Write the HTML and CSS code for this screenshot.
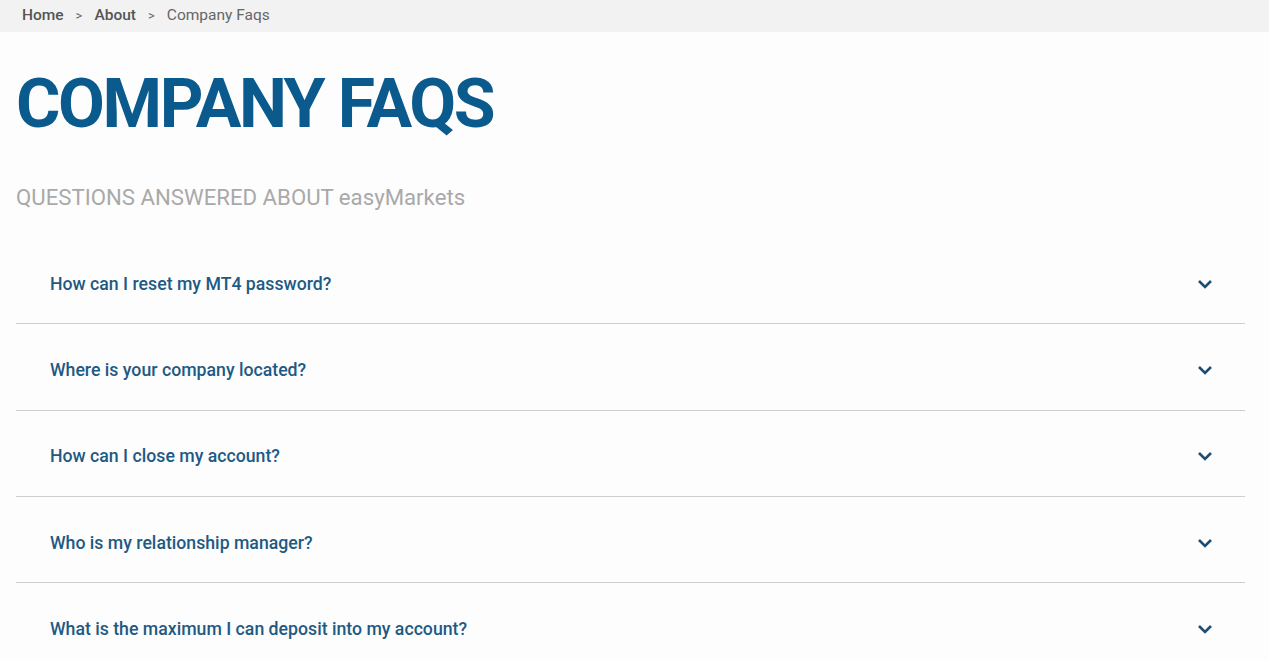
FILE: index.html
```html
<!DOCTYPE html>
<html lang="en">
<head>
  <meta charset="UTF-8">
  <title>Company Faqs</title>
  <link rel="stylesheet" href="styles.css">
</head>
<body>

<nav class="crumbs">
  <a href="#">Home</a>
  <span class="sep">&gt;</span>
  <a href="#">About</a>
  <span class="sep">&gt;</span>
  <span class="current">Company Faqs</span>
</nav>

<main class="page">
  <h1>COMPANY FAQS</h1>
  <h2>QUESTIONS ANSWERED ABOUT easyMarkets</h2>

  <div class="faq">
    <div class="faq-item">
      <span class="q">How can I reset my MT4 password?</span>
      <svg class="chev" viewBox="0 0 16 10"><path d="M2 2l6 6 6-6"/></svg>
    </div>
    <div class="faq-item">
      <span class="q">Where is your company located?</span>
      <svg class="chev" viewBox="0 0 16 10"><path d="M2 2l6 6 6-6"/></svg>
    </div>
    <div class="faq-item">
      <span class="q">How can I close my account?</span>
      <svg class="chev" viewBox="0 0 16 10"><path d="M2 2l6 6 6-6"/></svg>
    </div>
    <div class="faq-item">
      <span class="q">Who is my relationship manager?</span>
      <svg class="chev" viewBox="0 0 16 10"><path d="M2 2l6 6 6-6"/></svg>
    </div>
    <div class="faq-item">
      <span class="q">What is the maximum I can deposit into my account?</span>
      <svg class="chev" viewBox="0 0 16 10"><path d="M2 2l6 6 6-6"/></svg>
    </div>
  </div>
</main>

</body>
</html>
```

FILE: styles.css
```css
body {
  margin: 0;
  font-family: Roboto, "Liberation Sans", Arial, sans-serif;
  background-color: #fdfdfd;
  color: #333;
}
.crumbs {
  background-color: #f2f2f2;
  height: 32px;
  display: flex;
  align-items: center;
  padding-left: 22px;
  padding-bottom: 2px;
  box-sizing: border-box;
  font-size: 15.5px;
  color: #666;
}
.crumbs a {
  color: #555;
  font-weight: 500;
  text-decoration: none;
}
.crumbs .sep {
  margin: 0 12px;
  font-size: 13px;
  color: #666;
}
.page {
  padding: 0 24px 0 16px;
}
h1 {
  margin: 36px 0 0;
  font-size: 68px;
  line-height: 72px;
  font-weight: 700;
  color: #0b5a8e;
  letter-spacing: -2.4px;
}
h2 {
  margin: 43px 0 0;
  font-size: 22.2px;
  line-height: 28px;
  font-weight: 400;
  color: #a9a9a9;
}
.faq {
  margin-top: 27px;
}
.faq-item {
  display: flex;
  align-items: center;
  justify-content: space-between;
  height: 86.3px;
  padding: 6px 32px 0 34px;
  box-sizing: border-box;
  border-bottom: 1.5px solid #cfcfcf;
}
.q {
  font-size: 17.7px;
  font-weight: 500;
  color: #1e5a84;
}
.chev {
  width: 16px;
  height: 10px;
  fill: none;
  stroke: #1d4d72;
  stroke-width: 2.6;
}
```
